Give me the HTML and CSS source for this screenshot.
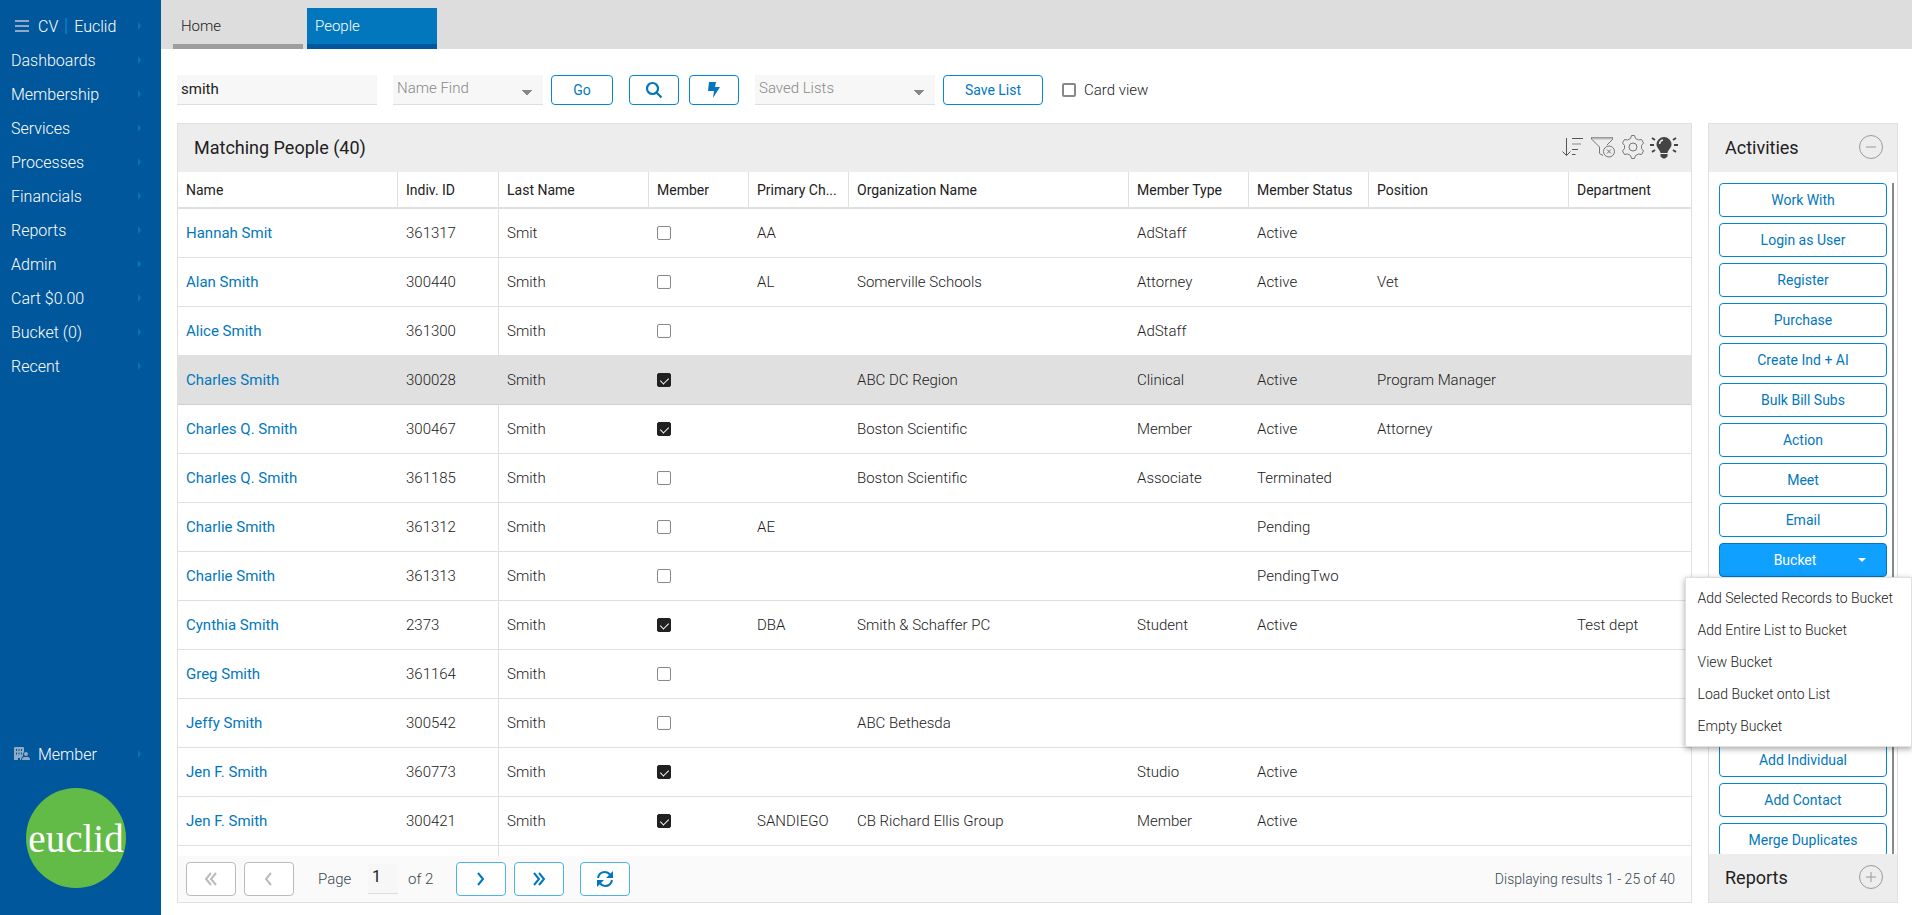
FILE: index.html
```html
<!DOCTYPE html>
<html lang="en">
<head>
<meta charset="utf-8">
<title>People</title>
<link rel="stylesheet" href="styles.css">
</head>
<body>
<div class="app">
  <nav class="sidebar">
    <ul class="menu">
      <li><a class="menu-item brand" href="#"><svg class="burger" width="14" height="12" viewBox="0 0 14 12"><path d="M0 1h14M0 6h14M0 11h14" stroke="#90aac4" stroke-width="2"/></svg><span>CV</span><i class="bar"></i><span>Euclid</span></a></li>
      <li><a class="menu-item" href="#">Dashboards</a></li>
      <li><a class="menu-item" href="#">Membership</a></li>
      <li><a class="menu-item" href="#">Services</a></li>
      <li><a class="menu-item" href="#">Processes</a></li>
      <li><a class="menu-item" href="#">Financials</a></li>
      <li><a class="menu-item" href="#">Reports</a></li>
      <li><a class="menu-item" href="#">Admin</a></li>
      <li><a class="menu-item" href="#">Cart $0.00</a></li>
      <li><a class="menu-item" href="#">Bucket (0)</a></li>
      <li><a class="menu-item" href="#">Recent</a></li>
    </ul>
    <div class="account">
      <a class="menu-item member" href="#"><svg width="16" height="14" viewBox="0 0 16 14"><path fill="#90aac4" fill-rule="evenodd" d="M0 1Q0 0 1 0H9Q10 0 10 1V5Q8.500 6.500 9 9Q7 10.500 7 13H6V11H4V13H0ZM2 2V4H3V2ZM4.500 2V4H5.500V2ZM7 2V4H8V2ZM2 5.500V7.500H3V5.500ZM4.500 5.500V7.500H5.500V5.500ZM7 5.500V7.500H8V5.500Z"/><circle cx="12" cy="7" r="2" fill="#90aac4"/><path fill="#90aac4" d="M8 13Q8 10 10.500 10H13.500Q16 10 16 13Z"/></svg><span>Member</span></a>
      <div class="logo">euclid</div>
    </div>
  </nav>
  <div class="content">
    <div class="tabs">
      <button class="tab">Home</button>
      <button class="tab active">People</button>
    </div>
    <div class="toolbar">
      <input class="field search" type="text" value="smith" aria-label="Search people">
      <select class="field find" aria-label="Name Find"><option>Name Find</option></select>
      <button class="btn go">Go</button>
      <button class="btn icon-btn search-btn" aria-label="Search"><svg width="18" height="18" viewBox="0 0 18 18" fill="none" stroke="#0277bd" stroke-width="2.200"><circle cx="7.500" cy="7.500" r="5.500"/><path d="M11.500 11.500L16.500 16.500"/></svg></button>
      <button class="btn icon-btn" aria-label="Quick search"><svg width="12" height="16" viewBox="0 0 12 16"><path fill="#0277bd" d="M1 0H8L7 5H12L5 16L6 9H0Z"/></svg></button>
      <select class="field lists" aria-label="Saved Lists"><option>Saved Lists</option></select>
      <button class="btn save">Save List</button>
      <label class="card-view"><input class="check" type="checkbox">Card view</label>
    </div>
    <main class="main">
      <section class="panel people">
        <header class="panel-head">
          <h2>Matching People (40)</h2>
          <div class="tools">
            <svg width="24" height="24" viewBox="0 0 24 24" fill="none" stroke="#555"><path d="M5.500 3V20.500M1.500 16.500L5.500 20.500L9.500 16.500M11 3.500H22M11 14.500H17M11 19.500H14.500"/><path d="M11 9H20" stroke="#bbb" stroke-width="2"/></svg>
            <svg width="26" height="24" viewBox="0 0 26 24" fill="none" stroke="#777"><path d="M1.500 2.500H22.500V4.500L17 10M1.500 2.500V4L9.500 12V18.500L13 20.500"/><path d="M2 3.500H22" stroke="#bbb" stroke-width="2"/><circle cx="19" cy="16.500" r="5.500"/><path d="M17 14.500L21 18.500M21 14.500L17 18.500"/></svg>
            <svg width="24" height="24" viewBox="0 0 24 24" fill="none" stroke="#777"><path d="M9.500 3.500L10.500 .5H13.500L14.500 3.500L17.500 5L20.500 4.500L22.500 8L20.500 10.500V13.500L22.500 16L20.500 19.500L17.500 19L14.500 20.500L13.500 23.500H10.500L9.500 20.500L6.500 19L3.500 19.500L1.500 16L3.500 13.500V10.500L1.500 8L3.500 4.500L6.500 5Z" stroke-linejoin="round"/><circle cx="12" cy="12" r="4"/></svg>
            <svg width="28" height="24" viewBox="0 0 28 24"><path fill="#444" d="M14 2A7.500 7.500 0 0 0 6.500 9.500C6.500 13 10 14.500 10.500 18H17.500C18 14.500 21.500 13 21.500 9.500A7.500 7.500 0 0 0 14 2ZM10.500 19H17.500V21.500L15 23.500H13L10.500 21.500Z"/><path fill="none" stroke="#444" stroke-width="2" d="M0 10H4M24 10H28M2 3L5 5M26 3L23 5M2 17L5 15M26 17L23 15"/><path fill="none" stroke="#eee" stroke-width="1.500" d="M9.500 9Q10 5.500 13 5"/></svg>
          </div>
        </header>
        <div class="grid-wrap">
          <table class="grid">
            <colgroup><col class="c220"><col class="c101"><col class="c150"><col class="c100"><col class="c100"><col class="c280"><col class="c120"><col class="c120"><col class="c200"><col></colgroup>
            <thead><tr><th>Name</th><th>Indiv. ID</th><th>Last Name</th><th>Member</th><th>Primary Ch...</th><th>Organization Name</th><th>Member Type</th><th>Member Status</th><th>Position</th><th>Department</th></tr></thead>
            <tbody>
              <tr><td><a href="#">Hannah Smit</a></td><td>361317</td><td>Smit</td><td><input class="check" type="checkbox" aria-label="Member"></td><td>AA</td><td></td><td>AdStaff</td><td>Active</td><td></td><td></td></tr>
              <tr><td><a href="#">Alan Smith</a></td><td>300440</td><td>Smith</td><td><input class="check" type="checkbox" aria-label="Member"></td><td>AL</td><td>Somerville Schools</td><td>Attorney</td><td>Active</td><td>Vet</td><td></td></tr>
              <tr><td><a href="#">Alice Smith</a></td><td>361300</td><td>Smith</td><td><input class="check" type="checkbox" aria-label="Member"></td><td></td><td></td><td>AdStaff</td><td></td><td></td><td></td></tr>
              <tr class="selected"><td><a href="#">Charles Smith</a></td><td>300028</td><td>Smith</td><td><input class="check" type="checkbox" checked aria-label="Member"></td><td></td><td>ABC DC Region</td><td>Clinical</td><td>Active</td><td>Program Manager</td><td></td></tr>
              <tr><td><a href="#">Charles Q. Smith</a></td><td>300467</td><td>Smith</td><td><input class="check" type="checkbox" checked aria-label="Member"></td><td></td><td>Boston Scientific</td><td>Member</td><td>Active</td><td>Attorney</td><td></td></tr>
              <tr><td><a href="#">Charles Q. Smith</a></td><td>361185</td><td>Smith</td><td><input class="check" type="checkbox" aria-label="Member"></td><td></td><td>Boston Scientific</td><td>Associate</td><td>Terminated</td><td></td><td></td></tr>
              <tr><td><a href="#">Charlie Smith</a></td><td>361312</td><td>Smith</td><td><input class="check" type="checkbox" aria-label="Member"></td><td>AE</td><td></td><td></td><td>Pending</td><td></td><td></td></tr>
              <tr><td><a href="#">Charlie Smith</a></td><td>361313</td><td>Smith</td><td><input class="check" type="checkbox" aria-label="Member"></td><td></td><td></td><td></td><td>PendingTwo</td><td></td><td></td></tr>
              <tr><td><a href="#">Cynthia Smith</a></td><td>2373</td><td>Smith</td><td><input class="check" type="checkbox" checked aria-label="Member"></td><td>DBA</td><td>Smith &amp; Schaffer PC</td><td>Student</td><td>Active</td><td></td><td>Test dept</td></tr>
              <tr><td><a href="#">Greg Smith</a></td><td>361164</td><td>Smith</td><td><input class="check" type="checkbox" aria-label="Member"></td><td></td><td></td><td></td><td></td><td></td><td></td></tr>
              <tr><td><a href="#">Jeffy Smith</a></td><td>300542</td><td>Smith</td><td><input class="check" type="checkbox" aria-label="Member"></td><td></td><td>ABC Bethesda</td><td></td><td></td><td></td><td></td></tr>
              <tr><td><a href="#">Jen F. Smith</a></td><td>360773</td><td>Smith</td><td><input class="check" type="checkbox" checked aria-label="Member"></td><td></td><td></td><td>Studio</td><td>Active</td><td></td><td></td></tr>
              <tr><td><a href="#">Jen F. Smith</a></td><td>300421</td><td>Smith</td><td><input class="check" type="checkbox" checked aria-label="Member"></td><td>SANDIEGO</td><td>CB Richard Ellis Group</td><td>Member</td><td>Active</td><td></td><td></td></tr>
              <tr><td></td><td></td><td></td><td></td><td></td><td></td><td></td><td></td><td></td><td></td></tr>
            </tbody>
          </table>
        </div>
        <footer class="pager">
          <button class="btn page-btn" disabled aria-label="First page"><svg width="14" height="14" viewBox="0 0 14 14"><path d="M7 1L2 7L7 13M12 1L7 7L12 13"/></svg></button>
          <button class="btn page-btn" disabled aria-label="Previous page"><svg width="14" height="14" viewBox="0 0 14 14"><path d="M9 1L4 7L9 13"/></svg></button>
          <label class="page-label" for="page">Page</label>
          <input class="field page-input" id="page" type="text" value="1">
          <span>of 2</span>
          <button class="btn page-btn next" aria-label="Next page"><svg width="14" height="14" viewBox="0 0 14 14"><path d="M4 1L9 7L4 13"/></svg></button>
          <button class="btn page-btn" aria-label="Last page"><svg width="14" height="14" viewBox="0 0 14 14"><path d="M2 1L7 7L2 13M7 1L12 7L7 13"/></svg></button>
          <button class="btn page-btn refresh" aria-label="Refresh"><svg width="16" height="16" viewBox="0 0 16 16"><path d="M1 7Q2 1 8 1Q11 1 13.500 4M15 9Q14 15 8 15Q5 15 2.500 12"/><path class="solid" d="M16 0V7H9ZM0 16V9H7Z"/></svg></button>
          <span class="results">Displaying results 1 - 25 of 40</span>
        </footer>
      </section>
      <aside class="panel side">
        <header class="panel-head"><h2>Activities</h2><button class="round" aria-label="Collapse"><svg width="26" height="26" viewBox="0 0 26 26" fill="none" stroke="#999"><circle cx="13" cy="13" r="11.500"/><path d="M8 13H18"/></svg></button></header>
        <div class="actions">
          <button class="btn">Work With</button>
          <button class="btn">Login as User</button>
          <button class="btn">Register</button>
          <button class="btn">Purchase</button>
          <button class="btn">Create Ind + AI</button>
          <button class="btn">Bulk Bill Subs</button>
          <button class="btn">Action</button>
          <button class="btn">Meet</button>
          <button class="btn">Email</button>
          <div class="dropdown">
            <button class="btn open"><span>Bucket</span><i class="caret"></i></button>
          </div>
          <button class="btn">Add Individual</button>
          <button class="btn">Add Contact</button>
          <button class="btn">Merge Duplicates</button>
        </div>
        <header class="panel-head"><h2>Reports</h2><button class="round" aria-label="Expand"><svg width="26" height="26" viewBox="0 0 26 26" fill="none" stroke="#999"><circle cx="13" cy="13" r="11.500"/><path d="M8 13H18M13 8V18"/></svg></button></header>
      </aside>
      <div class="popup">
        <a href="#">Add Selected Records to Bucket</a>
        <a href="#">Add Entire List to Bucket</a>
        <a href="#">View Bucket</a>
        <a href="#">Load Bucket onto List</a>
        <a href="#">Empty Bucket</a>
      </div>
    </main>
  </div>
</div>
</body>
</html>
```
FILE: styles.css
```css
* { box-sizing: border-box; }
body { margin: 0; font-family: Roboto, "Liberation Sans", sans-serif; font-size: 15px; font-weight: 300; color: #212121; background: #fff; }
a { text-decoration: none; color: inherit; }
button, input, select { font: inherit; margin: 0; }
.app { display: flex; height: 100vh; overflow: hidden; }

.sidebar { width: 161px; flex: none; background: #01579b; color: #fff; display: flex; flex-direction: column; justify-content: space-between; }
.menu { list-style: none; margin: 0; padding: 9px 0 0; }
.menu-item { display: flex; align-items: center; height: 34px; padding: 0 20px 0 11px; font-size: 16px; color: #fff; }
.menu-item::after { content: ""; margin-left: auto; border: 4px solid transparent; border-left: 3px solid #0277bd; border-right: 0; }
.brand { padding-left: 15px; }
.brand svg { margin-right: 9px; }
.brand .bar { width: 2px; height: 16px; background: #0277bd; margin: 0 7px; }
.member { padding-left: 14px; gap: 8px; }
.account { padding-bottom: 27px; }
.logo { width: 100px; height: 100px; border-radius: 50%; margin: 17px 0 0 26px; background: #62bb46; color: #fff; display: flex; align-items: center; justify-content: center; font: 39px "Liberation Serif", serif; }

.content { flex: 1; min-width: 0; display: flex; flex-direction: column; }
.tabs { flex: none; height: 49px; padding: 8px 12px 0; display: flex; gap: 4px; background: #ddd; }
.tab { width: 130px; border: 0; border-bottom: 5px solid #9e9e9e; padding: 0 8px; text-align: left; background: none; color: #212121; }
.tab.active { background: #0277bd; border-color: #01579b; color: #fff; }

.toolbar { display: flex; align-items: center; padding: 25px 16px 17px; height: 74px; flex: none; }
.field { height: 30px; border: 0; border-bottom: 1px solid #ddd; border-radius: 0; background-color: #f7f7f7; padding: 0 4px 2px; color: #212121; }
.search { width: 200px; font-weight: 400; }
select.field {
  appearance: none;
  padding-bottom: 4px;
  color: #888;
  background-image: linear-gradient(to top right, transparent 50%, #888 50%), linear-gradient(to top left, transparent 50%, #888 50%);
  background-position: right 16px top 15px, right 11px top 15px;
  background-repeat: no-repeat;
  background-size: 5px 6px;
}
.find { width: 150px; margin: 0 8px 0 16px; }
.btn { height: 30px; border: 1px solid #0288d1; border-radius: 4px; background: #fff; color: #0277bd; font-size: 14px; font-weight: 400; padding: 0; display: flex; align-items: center; justify-content: center; flex: none; }
.go { width: 62px; }
.icon-btn { width: 50px; }
.search-btn { margin: 0 10px 0 16px; }
.lists { width: 180px; margin: 0 8px 0 16px; }
.save { width: 100px; }
.card-view { display: flex; align-items: center; gap: 8px; margin-left: 19px; }
.check { appearance: none; width: 14px; height: 14px; border: 1px solid #888; border-radius: 2px; background: #fff; display: block; }
.card-view .check { border-width: 2px; }
.check:checked { background: #212121; border-color: #212121; }
.check:checked::after { content: ""; display: block; width: 4px; height: 7px; margin: 2px 0 0 4px; border: solid #fff; border-width: 0 1px 1px 0; transform: rotate(45deg); }

.main { flex: 1; min-height: 0; display: flex; gap: 16px; padding: 0 14px 12px 16px; position: relative; }
.panel { border: 1px solid #e0e0e0; display: flex; flex-direction: column; min-height: 0; }
.people { flex: 1; min-width: 0; }
.panel-head { flex: none; height: 48px; padding: 0 13px 2px 16px; display: flex; align-items: center; justify-content: space-between; background: #ededed; }
.panel-head h2 { margin: 0; font-size: 18px; font-weight: 400; }
.tools { display: flex; gap: 5px; }
.grid-wrap { flex: 1; min-height: 0; overflow: hidden; }
.grid { width: 100%; border-collapse: separate; border-spacing: 0; table-layout: fixed; }
.c100 { width: 100px; }
.c101 { width: 101px; }
.c120 { width: 120px; }
.c150 { width: 150px; }
.c200 { width: 200px; }
.c220 { width: 220px; }
.c280 { width: 280px; }
.grid th, .grid td { text-align: left; padding: 0 8px; white-space: nowrap; overflow: hidden; text-overflow: ellipsis; }
.grid th { height: 37px; font-size: 14px; font-weight: 400; border-bottom: 2px solid #e0e0e0; border-right: 1px solid #e0e0e0; }
.grid th:last-child { border-right: 0; }
.grid td { height: 49px; border-bottom: 1px solid #e0e0e0; }
.grid td:nth-child(2) { border-right: 1px solid #e0e0e0; }
.grid td a { color: #0277bd; font-weight: 400; }
.grid .selected td { background: #e0e0e0; border-bottom-color: #d0d0d0; }

.pager { flex: none; height: 46px; padding: 0 16px 0 8px; display: flex; align-items: center; background: #fafafa; color: #37474f; }
.page-btn { width: 50px; height: 34px; margin-right: 8px; border-color: #4fb3e3; }
.page-btn svg { fill: none; stroke: #0277bd; stroke-width: 2; }
.page-btn .solid { fill: #0277bd; stroke: none; }
.page-btn:disabled { border-color: #bbb; }
.page-btn:disabled svg { stroke: #bbb; }
.page-label { width: 50px; margin-left: 16px; }
.page-input { width: 30px; margin-right: 10px; padding-bottom: 4px; font-size: 16px; font-weight: 400; }
.next { margin-left: 23px; }
.refresh { margin-left: 8px; }
.results { margin-left: auto; font-size: 14px; }

.side { width: 190px; flex: none; }
.round { border: 0; padding: 0; background: none; display: flex; }
.actions { flex: 1; min-height: 0; overflow: hidden; margin: 11px 3px 0 0; padding: 0 5px 0 10px; display: flex; flex-direction: column; gap: 6px; border-right: 2px solid #888; }
.actions .btn { width: 100%; height: 34px; }
.dropdown { flex: none; padding-bottom: 160px; }
.actions .open { background: #10a0ff; border-color: #0277bd; color: #fff; padding-left: 34px; }
.open .caret { border: 4px solid transparent; border-top-color: #fff; border-bottom: 0; margin-left: 42px; }
.popup { position: absolute; top: 454px; right: 0; padding: 4px 0; border: 1px solid #e0e0e0; background: #fff; box-shadow: 0 2px 6px rgba(0, 0, 0, .35); display: flex; flex-direction: column; }
.popup a { line-height: 32px; padding: 0 18px 0 12px; font-size: 14px; }
```
